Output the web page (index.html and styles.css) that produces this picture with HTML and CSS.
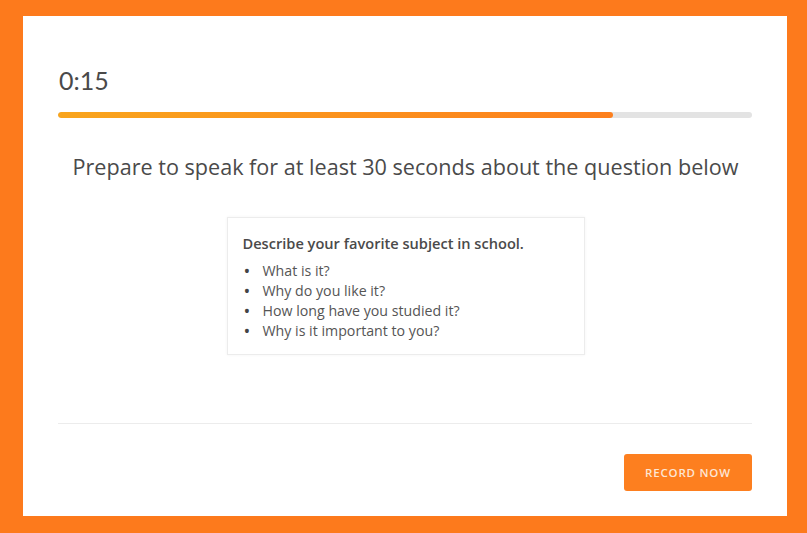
FILE: index.html
```html
<!DOCTYPE html>
<html lang="en">
<head>
    <meta charset="UTF-8">
    <meta name="viewport" content="width=device-width, initial-scale=1.0">
    <title>Speaking Prep</title>
    <link rel="stylesheet" href="styles.css">
</head>
<body>
    <div class="panel">
        <div class="timer">0:15</div>
        <div class="progress">
            <div class="progress-fill" style="width: 80%;"></div>
        </div>
        <h1 class="prompt">Prepare to speak for at least 30 seconds about the question below</h1>
        <div class="question-card">
            <div class="question-title">Describe your favorite subject in school.</div>
            <ul class="question-list">
                <li>What is it?</li>
                <li>Why do you like it?</li>
                <li>How long have you studied it?</li>
                <li>Why is it important to you?</li>
            </ul>
        </div>
        <div class="footer">
            <button type="button" class="record-button">Record Now</button>
        </div>
    </div>
</body>
</html>
```

FILE: styles.css
```css
body {
    font-family: 'Open Sans', 'Lato', sans-serif;
    background-color: #fd7a1c;
    margin: 0;
    padding: 16px 20px 17px 23px;
}

.panel {
    background-color: #fff;
    width: 764px;
    height: 500px;
    box-sizing: border-box;
    padding: 49px 35px 0 35px;
    display: flex;
    flex-direction: column;
}

.timer {
    font-family: 'Lato', sans-serif;
    color: #4a4a4a;
    font-size: 25px;
    line-height: 30px;
    margin-left: 1px;
}

.progress {
    margin-top: 17px;
    height: 6px;
    background-color: #e3e3e3;
    border-radius: 3px;
    overflow: hidden;
}

.progress-fill {
    height: 100%;
    background: linear-gradient(to right, #f9a51d, #fd7f1d);
    border-radius: 3px;
}

.prompt {
    margin: 36px 0 0 0;
    text-align: center;
    font-weight: normal;
    color: #4a4a4a;
    font-size: 21.6px;
    line-height: 26px;
    padding-left: 1px;
}

.question-card {
    align-self: center;
    margin-top: 37px;
    margin-left: 1px;
    width: 358px;
    height: 138px;
    box-sizing: border-box;
    border: 1px solid #ececec;
    box-shadow: 0 0 3px rgba(0, 0, 0, 0.05);
    padding: 16px 15px 0 15px;
}

.question-title {
    font-weight: 600;
    color: #4a4a4a;
    font-size: 14.6px;
    line-height: 18px;
}

.question-list {
    list-style: none;
    margin: 9px 0 0 0;
    padding: 0;
    color: #555;
    font-size: 14.2px;
    line-height: 20px;
}

.question-list li {
    display: flex;
}

.question-list li::before {
    content: "\2022";
    flex: 0 0 20px;
    padding-left: 1px;
    box-sizing: border-box;
    font-size: 18px;
    line-height: 20px;
    color: #444;
}

.footer {
    margin-top: 68px;
    border-top: 1px solid #ececec;
    display: flex;
    justify-content: flex-end;
    padding-top: 30px;
}

.record-button {
    background-color: #fd7f1f;
    color: #fde6d4;
    border: none;
    border-radius: 3px;
    width: 128px;
    height: 37px;
    font-family: 'Open Sans', sans-serif;
    font-weight: 600;
    font-size: 11.5px;
    letter-spacing: 0.8px;
    text-transform: uppercase;
    cursor: pointer;
}
```
